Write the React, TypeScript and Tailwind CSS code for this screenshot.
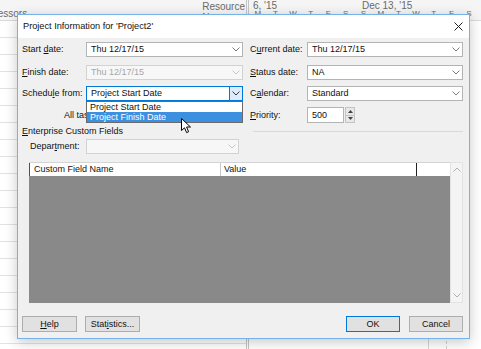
import clsx from 'clsx';
import type { ReactNode } from 'react';

function Chevron({ className }: { className?: string }) {
  return (
    <svg width="8" height="5" viewBox="0 0 8 5" className={className}>
      <path d="M0.5 0.5 L4 4 L7.5 0.5" fill="none" stroke="currentColor" strokeWidth="1" />
    </svg>
  );
}

function Combo({
  value,
  w,
  disabled = false,
  focused = false,
  children,
}: {
  value: string;
  w: string;
  disabled?: boolean;
  focused?: boolean;
  children?: ReactNode;
}) {
  return (
    <div
      className={clsx(
        'relative flex h-[15px] items-center border',
        w,
        disabled
          ? 'border-[#d2d2d2] bg-[#f7f7f7] text-[#a6a6a6]'
          : focused
          ? 'border-[#0078d7] bg-white'
          : 'border-[#b4b4b4] bg-white'
      )}
    >
      <span className="flex-1 pl-[4px]">{value}</span>
      <span
        className={clsx(
          'flex h-full w-[13px] items-center justify-center',
          focused
            ? 'border-l border-[#0078d7] bg-[#dcecfc] text-[#3a3a3a]'
            : disabled
            ? 'text-[#c8c8c8]'
            : 'text-[#7a7a7a]'
        )}
      >
        <Chevron />
      </span>
      {children}
    </div>
  );
}

function Btn({ children, w, def = false }: { children: ReactNode; w: string; def?: boolean }) {
  return (
    <div
      className={clsx(
        'flex h-[16px] items-center justify-center border bg-[#e1e1e1]',
        w,
        def ? 'border-[#0078d7]' : 'border-[#adadad]'
      )}
    >
      {children}
    </div>
  );
}

function Backdrop() {
  const days = ['M', 'T', 'W', 'T', 'F', 'S', 'S', 'M', 'T', 'W', 'T', 'F', 'S'];
  return (
    <div className="flex h-full flex-col text-[#6b6b6b]">
      <div className="flex h-[21px] shrink-0 border-b border-[#dadada] bg-[#f5f5f5] text-[10px]">
        <div className="flex w-[246px] justify-between overflow-hidden">
          <span className="ml-[-34px] mt-[9px]">Predecessors</span>
          <span className="mr-[1px] mt-[1px] leading-[11px]">
            Resource
            <br />
            Names
          </span>
        </div>
        <div className="w-[3px] border-x border-[#c4c4c4]" />
        <div className="flex flex-col">
          <div className="flex h-[10px] pt-[1px] leading-none">
            <span className="w-[109px] pl-[4px]">6, '15</span>
            <span className="pl-[4px]">Dec 13, '15</span>
          </div>
          <div className="flex text-[8px] leading-none">
            {days.map((d, i) => (
              <span key={i} className="w-[17.6px] text-center">
                {d}
              </span>
            ))}
          </div>
        </div>
      </div>
      <div className="flex flex-1">
        <div className="w-[246px] bg-[repeating-linear-gradient(to_bottom,transparent_0px,transparent_16px,#e2e2e2_16px,#e2e2e2_17px)]" />
        <div className="w-[3px] border-x border-[#c4c4c4]" />
        <div className="w-[180px] border-r border-[#d6d6d6]" />
        <div className="w-[18px] border-r border-dashed border-[#cfcfcf]" />
      </div>
    </div>
  );
}

function Cursor() {
  return (
    <svg
      width="11"
      height="16"
      viewBox="0 0 11 16"
      className="absolute left-[163px] top-[103px] z-20"
    >
      <path
        d="M0.5 0.5 L0.5 12.5 L3.5 9.8 L5.6 14.6 L7.6 13.7 L5.6 9 L9.5 9 Z"
        fill="white"
        stroke="black"
        strokeWidth="1"
        strokeLinejoin="round"
      />
    </svg>
  );
}

function Dialog() {
  return (
    <div className="absolute left-[17px] top-[14px] flex h-[325px] w-[453px] flex-col border border-[#74b2ea] bg-[#f0f0f0] shadow-[0_3px_12px_rgba(0,0,0,0.22)]">
      <div className="flex h-[23px] shrink-0 items-center justify-between bg-white pl-[5px] pr-[6px] text-[9.2px]">
        <span>Project Information for 'Project2'</span>
        <svg width="9" height="9" viewBox="0 0 9 9">
          <path d="M0.5 0.5 L8.5 8.5 M8.5 0.5 L0.5 8.5" stroke="#222" strokeWidth="1" />
        </svg>
      </div>

      <div className="flex flex-1 flex-col pl-[4px] pr-[6px] pt-[4px]">
        <div className="flex h-[15px] items-center">
          <span className="w-[64px]">
            Start <u className="underline-offset-1">d</u>ate:
          </span>
          <Combo value="Thu 12/17/15" w="w-[157px]" />
          <span className="w-[7px]" />
          <span className="w-[57px]">
            C<u className="underline-offset-1">u</u>rrent date:
          </span>
          <Combo value="Thu 12/17/15" w="w-[156px]" />
        </div>

        <div className="mt-[8px] flex h-[15px] items-center">
          <span className="w-[64px]">
            <u className="underline-offset-1">F</u>inish date:
          </span>
          <Combo value="Thu 12/17/15" w="w-[157px]" disabled />
          <span className="w-[7px]" />
          <span className="w-[57px]">
            <u className="underline-offset-1">S</u>tatus date:
          </span>
          <Combo value="NA" w="w-[156px]" />
        </div>

        <div className="mt-[6px] flex h-[15px] items-center">
          <span className="w-[64px]">
            Schedu<u className="underline-offset-1">l</u>e from:
          </span>
          <Combo value="Project Start Date" w="w-[157px]" focused>
            <div className="absolute left-[-1px] top-[14px] z-10 flex w-[157px] flex-col border border-[#6a6a6a] bg-white">
              <span className="flex h-[10px] items-center pl-[3px]">Project Start Date</span>
              <span className="flex h-[10px] items-center bg-[#3d8fe0] pl-[3px] text-white">
                Project Finish Date
              </span>
            </div>
          </Combo>
          <span className="w-[7px]" />
          <span className="w-[57px]">
            C<u className="underline-offset-1">a</u>lendar:
          </span>
          <Combo value="Standard" w="w-[156px]" />
        </div>

        <div className="mt-[6px] flex h-[16px] items-center">
          <span className="w-[221px] whitespace-nowrap pl-[42px]">All tasks begin as soon as possible.</span>
          <span className="w-[7px]" />
          <span className="w-[57px]">
            <u className="underline-offset-1">P</u>riority:
          </span>
          <div className="flex h-[16px] w-[37px] items-center border border-[#b4b4b4] bg-white pl-[4px]">500</div>
          <div className="ml-[1px] flex h-[16px] w-[10px] flex-col border border-[#c4c4c4] bg-[#e8e8e8] text-[#404040]">
            <span className="flex flex-1 items-center justify-center border-b border-[#c4c4c4]">
              <svg width="5" height="3" viewBox="0 0 5 3">
                <path d="M0 3 L2.5 0 L5 3 Z" fill="currentColor" />
              </svg>
            </span>
            <span className="flex flex-1 items-center justify-center">
              <svg width="5" height="3" viewBox="0 0 5 3">
                <path d="M0 0 L2.5 3 L5 0 Z" fill="currentColor" />
              </svg>
            </span>
          </div>
        </div>

        <div className="mt-[2px] flex h-[12px] items-center">
          <span className="whitespace-nowrap">
            <u className="underline-offset-1">E</u>nterprise Custom Fields
          </span>
          <span className="ml-[130px] h-px flex-1 bg-[#d9d9d9]" />
        </div>

        <div className="mt-[2px] flex h-[15px] items-center pl-[8px]">
          <span className="w-[56px]">
            Depar<u className="underline-offset-1">t</u>ment:
          </span>
          <Combo value="" w="w-[153px]" disabled />
        </div>

        <div className="ml-[7px] mt-[8px] flex h-[141px] w-[434px]">
          <div className="flex w-[421px] flex-col">
            <div className="flex h-[14px] border-t border-[#d4d4d4] bg-white">
              <span className="flex w-[192px] items-center border-l border-r border-l-[#505050] border-r-[#c8c8c8] pl-[4px]">
                Custom Field Name
              </span>
              <span className="flex w-[196px] items-center border-r border-[#202020] pl-[3px]">Value</span>
              <span className="flex-1" />
            </div>
            <div className="flex-1 bg-[#898989]" />
          </div>
          <div className="flex w-[13px] flex-col items-center justify-between border border-[#e2e2e2] bg-[#f4f4f4] py-[4px] text-[#b0b0b0]">
            <Chevron className="rotate-180" />
            <Chevron />
          </div>
        </div>

        <div className="mt-[13px] flex h-[16px] items-center">
          <Btn w="w-[55px]">
            <span>
              <u className="underline-offset-1">H</u>elp
            </span>
          </Btn>
          <span className="w-[8px]" />
          <Btn w="w-[55px]">
            <span>
              Stat<u className="underline-offset-1">i</u>stics...
            </span>
          </Btn>
          <span className="flex-1" />
          <Btn w="w-[54px]" def>
            OK
          </Btn>
          <span className="w-[9px]" />
          <Btn w="w-[54px]">Cancel</Btn>
        </div>
      </div>
      <Cursor />
    </div>
  );
}

export default function App() {
  return (
    <div className="relative h-[349px] w-[481px] overflow-hidden bg-white font-['Liberation_Sans',Arial,sans-serif] text-[9px] leading-none text-[#111]">
      <Backdrop />
      <Dialog />
    </div>
  );
}
